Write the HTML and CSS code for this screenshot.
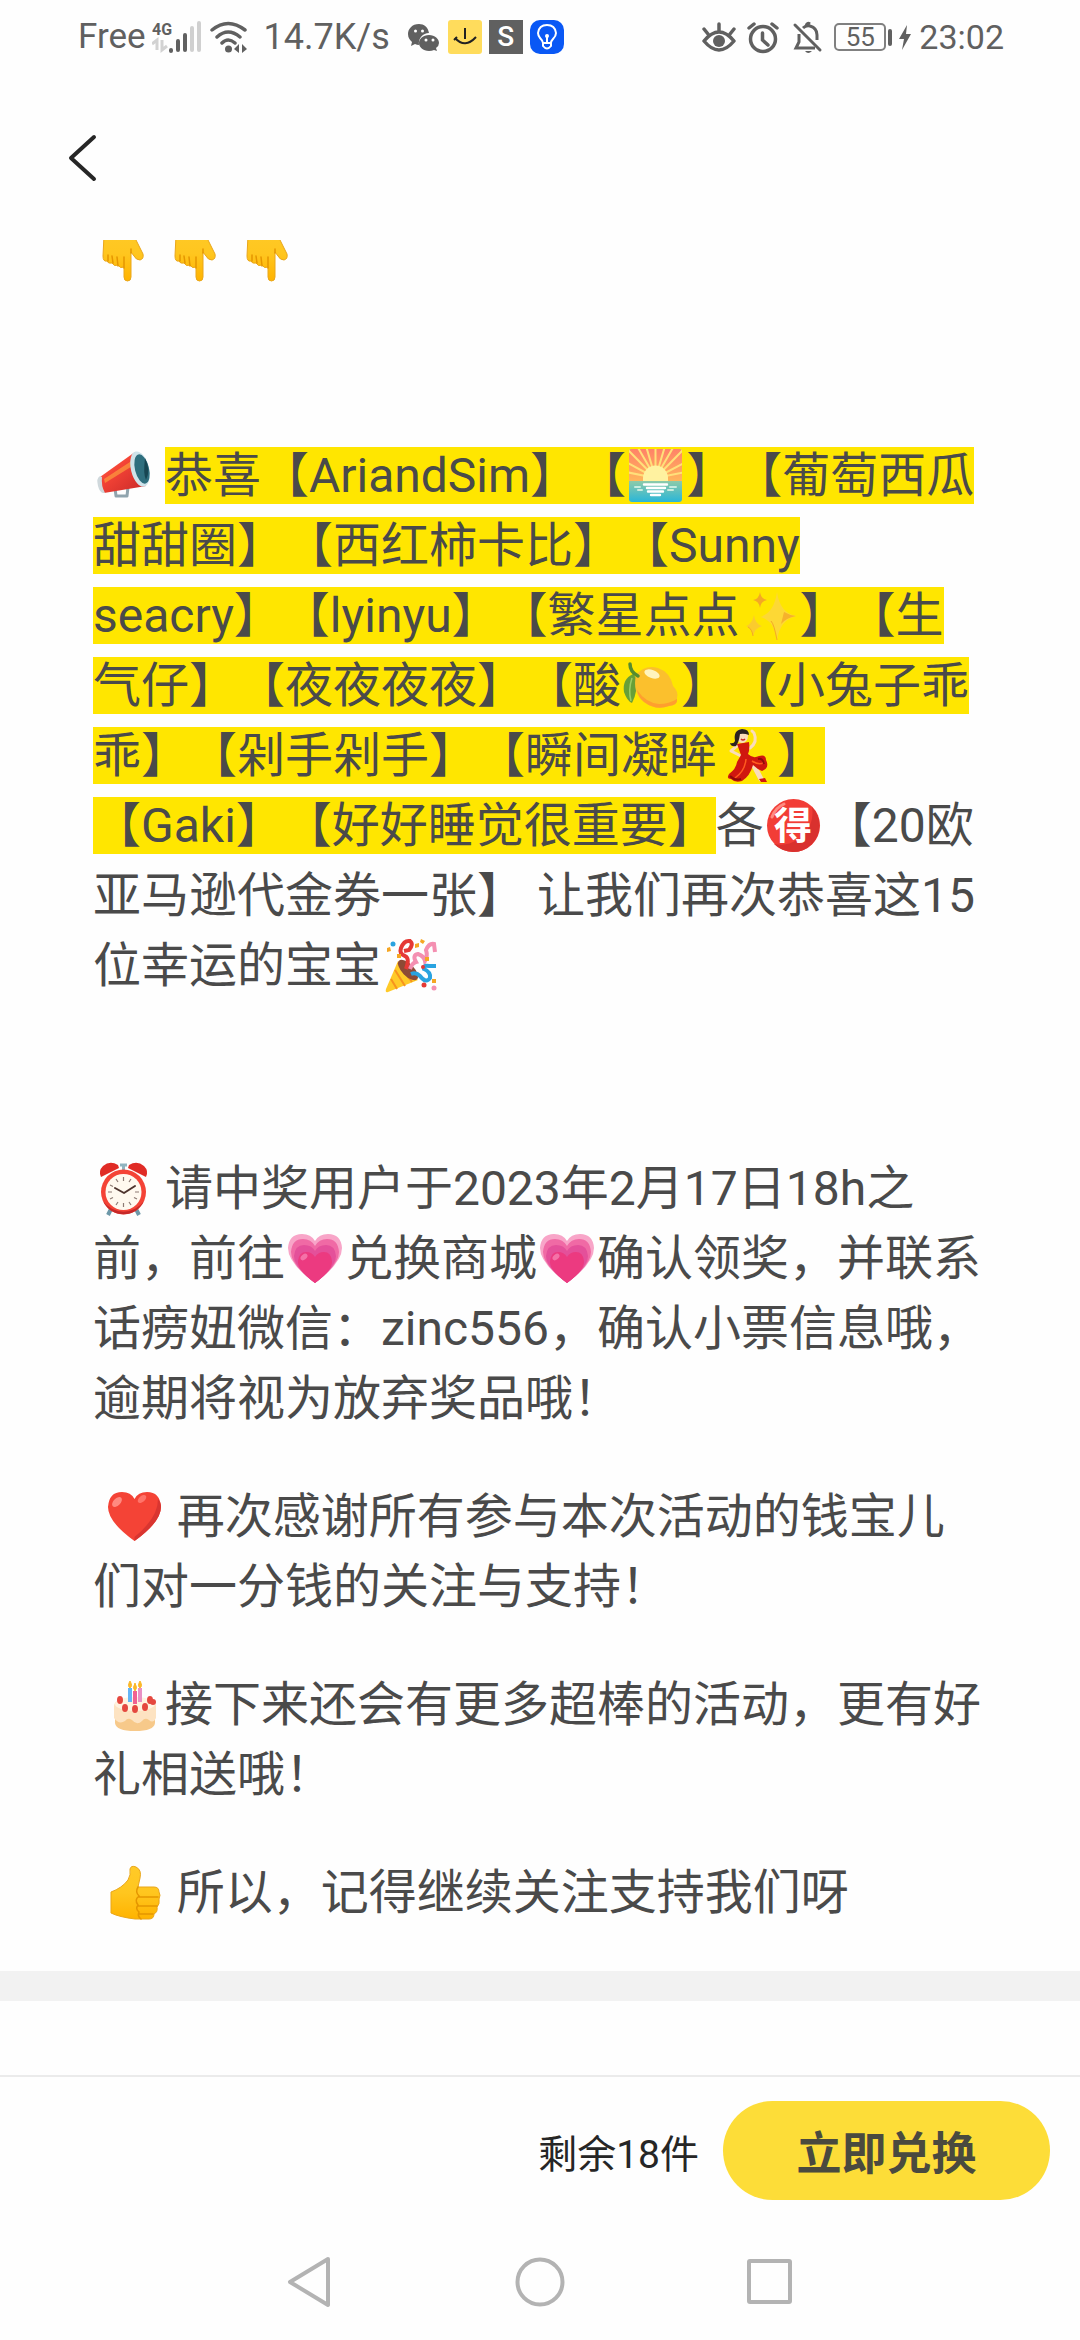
FILE: index.html
```
<!DOCTYPE html>
<html lang="zh-CN">
<head>
    <meta charset="UTF-8">
    <meta name="viewport" content="width=device-width, initial-scale=1.0">
    <title>兑换商城</title>
    <link rel="stylesheet" href="styles.css">
</head>
<body>

<!-- emoji -->
<svg class="sprite" width="0" height="0" aria-hidden="true">
    <defs>
        <linearGradient id="g-skin" x1="0" y1="0" x2="0" y2="1">
            <stop offset="0" stop-color="#ffca28"/>
            <stop offset="0.5" stop-color="#ffc61f"/>
            <stop offset="1" stop-color="#ffb300"/>
        </linearGradient>
        <linearGradient id="g-horn" x1="0" y1="0" x2="1" y2="1">
            <stop offset="0" stop-color="#ff7043"/>
            <stop offset="0.4" stop-color="#f44336"/>
            <stop offset="1" stop-color="#c62828"/>
        </linearGradient>
        <linearGradient id="g-sky" x1="0" y1="0" x2="0" y2="1">
            <stop offset="0" stop-color="#ff8268"/>
            <stop offset="1" stop-color="#ffb65c"/>
        </linearGradient>
        <linearGradient id="g-sea" x1="0" y1="0" x2="0" y2="1">
            <stop offset="0.600" stop-color="#8fcba8"/>
            <stop offset="1" stop-color="#29b6d8"/>
        </linearGradient>
        <clipPath id="c-sky"><rect x="3" y="3" width="53" height="34"/></clipPath>
    </defs>

    <symbol id="e-down" viewBox="0 0 60 60">
        <path d="M11 12 Q11 3 20 3 H38 Q42 3 43 10 V17 L50 31 Q51 36 47 37 Q43 37 41 33 L38 29 V54 Q38 58 34.500 58 Q31 58 31 54 V44 Q27 46 25 42 Q21 44 19 40 Q15 41 14 38 Q10 39 10 33 Z" fill="url(#g-skin)" stroke="#e9a61b" stroke-width="1"/>
        <path d="M15 38 V32 M20 40 L19 33 M25 43 L24 34 M31 45 V34 M38 30 V26" fill="none" stroke="#e59600" stroke-width="1.500" stroke-linecap="round"/>
    </symbol>

    <symbol id="e-horn" viewBox="0 0 60 60">
        <path d="M22 42 L23 50 H34 L35 41" fill="none" stroke="#90a4ae" stroke-width="3" stroke-linejoin="round"/>
        <path d="M7 31 L42 6 L53 40 L11 47 Q5 42 7 31 Z" fill="url(#g-horn)"/>
        <path d="M11 33 L40 14 L41 19 L12 37 Z" fill="#ffab40" opacity="0.6"/>
        <path d="M7 30 Q3 32 5 40 Q7 48 12 47 Q8 40 9 31 Z" fill="#cfd8dc"/>
        <ellipse cx="47" cy="23" rx="9" ry="18" transform="rotate(-14 47 23)" fill="#cfe3ea"/>
        <ellipse cx="49" cy="23" rx="7" ry="15" transform="rotate(-14 49 23)" fill="#2f6f7e"/>
        <path d="M52 12 Q58 24 53 34 Q50 28 52 12 Z" fill="#174652"/>
    </symbol>

    <symbol id="e-sunrise" viewBox="0 0 60 60">
        <rect x="3" y="3" width="53" height="53" rx="3" fill="url(#g-sea)"/>
        <path d="M3 35 V6 Q3 3 6 3 H53 Q56 3 56 6 V35 Z" fill="url(#g-sky)"/>
        <g clip-path="url(#c-sky)" stroke="#ffe07a" stroke-width="2">
            <path d="M29.500 32 L0 26 M29.500 32 L0 16 M29.500 32 L2 4 M29.500 32 L11 0 M29.500 32 L20 0 M29.500 32 V0 M29.500 32 L39 0 M29.500 32 L48 0 M29.500 32 L57 4 M29.500 32 L60 16 M29.500 32 L60 26"/>
        </g>
        <path d="M17 35 V32 A12.500 12.500 0 0 1 42 32 V35 Z" fill="#fff2a0"/>
        <path d="M18 38.500 H41 M21 42 H39 M22 45.500 H37 M25 49 H34" stroke="#fff" stroke-width="2.400" stroke-linecap="round"/>
        <path d="M9 41 H14 M12 44 H16 M44 41 H50 M42 44 H47" stroke="#c8ecdf" stroke-width="2" stroke-linecap="round"/>
    </symbol>

    <symbol id="e-sparkles" viewBox="0 0 60 60">
        <path d="M37 6 Q40 27 56 30 Q40 34 37 54 Q34 34 20 31 Q34 27 37 6 Z" fill="#fdd835"/>
        <path d="M44 26 Q49 29 56 30 Q46 32 41 38 Z" fill="#f6b22c"/>
        <path d="M20 6 Q21 13 27 14 Q21 15 20 22 Q19 15 13 14 Q19 13 20 6 Z" fill="#f4a825"/>
        <path d="M14 29 Q15 38 22 40 Q15 42 13 50 Q12 42 6 40 Q12 38 14 29 Z" fill="#fbcb2d"/>
        <path d="M37 54 Q34 38 31 35 M13 50 Q12 43 8 41" fill="none" stroke="#f4a825" stroke-width="1"/>
    </symbol>

    <symbol id="e-lemon" viewBox="0 0 60 60">
        <path d="M12 18 Q1 23 3 36 Q6 45 11 47 Q17 36 15 22 Z" fill="#689f38"/>
        <path d="M11 22 Q7 34 10 45" fill="none" stroke="#9ccc65" stroke-width="1.500"/>
        <path d="M15 19 Q24 8 37 12 Q49 16 52 30 Q58 36 56 42 Q57 49 48 50 Q35 55 23 46 Q11 37 15 19 Z" fill="#fbc02d"/>
        <path d="M16 34 Q25 47 38 48 Q48 48 56 43 Q57 49 48 50 Q35 55 23 46 Q17 41 16 34 Z" fill="#ff9f2e"/>
        <ellipse cx="31" cy="18" rx="8" ry="4" transform="rotate(20 31 18)" fill="#fff4bd"/>
        <path d="M9 8 Q9 16 17 20" fill="none" stroke="#558b2f" stroke-width="3.500" stroke-linecap="round"/>
    </symbol>

    <symbol id="e-dancer" viewBox="0 0 60 60">
        <path d="M33 22 Q41 16 37 7 L35 5" fill="none" stroke="#fadcbc" stroke-width="3" stroke-linecap="round"/>
        <path d="M21 19 L14 25 L24 30" fill="none" stroke="#fadcbc" stroke-width="3" stroke-linecap="round" stroke-linejoin="round"/>
        <path d="M34 34 L44 53" stroke="#fadcbc" stroke-width="5" stroke-linecap="round"/>
        <path d="M20 18 L32 16 Q33 24 31 28 Q36 33 42 30 Q49 28 49 34 Q53 42 45 45 Q40 43 36 39 Q33 50 25 55 Q18 57 14 53 Q9 53 12 48 Q19 43 20 36 L24 29 Z" fill="#d0170f"/>
        <path d="M29 33 Q28 45 18 52 M35 35 Q43 40 47 36" fill="none" stroke="#ff5a1f" stroke-width="1.500"/>
        <path d="M13 50 Q18 55 24 53 M41 33 Q46 32 47 38" fill="none" stroke="#8e0b08" stroke-width="2"/>
        <ellipse cx="25" cy="10" rx="6" ry="7" fill="#fadcbc"/>
        <path d="M18 15 Q16 4 25 3 Q32 3 32 9 Q27 7 23 8 Q22 16 19 20 Q14 21 13 17 Q17 18 18 15 Z" fill="#2b2221"/>
        <path d="M24 13 Q26 15 28 13" fill="none" stroke="#c62828" stroke-width="1.500"/>
        <path d="M42 53 L48 52 L50 56 H44 Z" fill="#d0170f"/>
    </symbol>

    <symbol id="e-party" viewBox="0 0 60 60">
        <path d="M17 25 L37 44 L7 56 Q4 57 5 53 Z" fill="#ffca28"/>
        <path d="M14 34 L24 50 M10 43 L16 53 M17 27 L31 46" stroke="#f7931e" stroke-width="2"/>
        <ellipse cx="27" cy="34" rx="6" ry="13" transform="rotate(-44 27 34)" fill="#8d4a35"/>
        <path d="M25 33 Q29 22 24 20 Q18 18 20 12 Q23 4 29 5 Q33 8 28 14 L23 15" fill="none" stroke="#e53935" stroke-width="4"/>
        <path d="M29 33 Q31 27 35 26 Q31 19 37 18 Q43 20 44 25 Q47 20 45 14 Q48 7 53 8 L54 16" fill="none" stroke="#f48fb1" stroke-width="4"/>
        <path d="M30 38 Q35 36 39 40 Q45 48 49 42 Q50 36 43 33 Q42 29 48 30 L55 30" fill="none" stroke="#29a3e0" stroke-width="4"/>
        <circle cx="12" cy="8" r="2.500" fill="#29a3e0"/>
        <circle cx="42" cy="31" r="2" fill="#e53935"/>
        <circle cx="43" cy="49" r="2.500" fill="#e53935"/>
        <circle cx="53" cy="52" r="2.500" fill="#f48fb1"/>
        <path d="M6 12 L9 11 L10 15 L6 16 Z M34 8 L38 7 L38 11 L34 12 Z M40 3 L44 5 L42 8 L39 6 Z M51 43 H55 V47 H51 Z M44 21 H48 V25 H44 Z M16 18 H20 V22 H16 Z" fill="#f5a623"/>
    </symbol>

    <symbol id="e-alarm" viewBox="0 0 60 60">
        <path d="M18 50 L15 56 M43 50 L46 56" stroke="#6d98a8" stroke-width="4"/>
        <path d="M30.500 12 V6 M27 6 H34" stroke="#90b4c0" stroke-width="3"/>
        <path d="M8 18 Q5 12 10 7 Q17 1 25 6 L26 9 Z M53 18 Q56 12 51 7 Q44 1 36 6 L35 9 Z" fill="#e02b26"/>
        <circle cx="30.500" cy="33" r="22.500" fill="#f44336"/>
        <path d="M10 42 A22.500 22.500 0 0 0 51 42 A25 25 0 0 1 10 42 Z" fill="#c62828"/>
        <circle cx="30.500" cy="33" r="18" fill="#fff9ef"/>
        <path d="M30.500 18 V22 M30.500 44 V48 M15 33 H19 M42 33 H46 M23 20 L25 23 M38 20 L36 23 M17 26 L20 27.500 M17 40 L20 38.500 M23 46 L25 43 M38 46 L36 43 M44 40 L41 38.500" stroke="#8d7b74" stroke-width="1.200"/>
        <path d="M22 29 L31 34 L42 27" fill="none" stroke="#4e342e" stroke-width="2" stroke-linecap="round" stroke-linejoin="round"/>
    </symbol>

    <symbol id="e-grow" viewBox="0 0 60 60">
        <path d="M30 54 Q3 34 3 19 Q4 5 17 5 Q26 5 30 12 Q34 5 43 5 Q56 5 57 19 Q57 34 30 54 Z" fill="#f8a5c8"/>
        <path d="M30 54 Q6 36 6 23 Q7 10 18 10 Q26 10 30 17 Q34 10 42 10 Q53 10 54 23 Q54 36 30 54 Z" fill="#f06aa5"/>
        <path d="M30 54 Q9 38 9 27 Q10 16 19 16 Q27 16 30 22 Q33 16 41 16 Q50 16 51 27 Q51 38 30 54 Z" fill="#e4509a"/>
        <path d="M30 54 Q12 41 13 32 Q14 23 21 23 Q27 23 30 28 Q33 23 39 23 Q46 23 47 32 Q48 41 30 54 Z" fill="#ec3a80"/>
        <ellipse cx="19" cy="28" rx="4" ry="2.500" transform="rotate(-40 19 28)" fill="#f472a8"/>
    </symbol>

    <symbol id="e-heart" viewBox="0 0 60 60">
        <path d="M29.500 54 Q3 35 3 20 Q4 5 17 5 Q26 5 29.500 12 Q33 5 42 5 Q55 5 56 20 Q56 35 29.500 54 Z" fill="#f44336"/>
        <path d="M53 12 Q53 31 29.500 50 L29.500 54 Q56 35 56 20 Q56 15 53 12 Z" fill="#d93530"/>
        <ellipse cx="12" cy="15" rx="6" ry="3.500" transform="rotate(-45 12 15)" fill="#ff8a80"/>
        <ellipse cx="37" cy="12" rx="5" ry="3" transform="rotate(-40 37 12)" fill="#ff7369"/>
    </symbol>

    <symbol id="e-cake" viewBox="0 1 60 60">
        <path d="M10 40 H50 V49 Q49 57 30 57 Q11 57 10 49 Z" fill="#f7c98a"/>
        <path d="M9 32 Q9 24 30 24 Q51 24 51 32 V44 Q48 50 44 46 Q40 43 37 47 Q32 52 27 46 Q23 43 20 47 Q14 51 9 44 Z" fill="#fde3c2"/>
        <ellipse cx="30" cy="30" rx="20" ry="7" fill="#fff3e0"/>
        <path d="M25 14 V28" stroke="#64b5f6" stroke-width="4"/>
        <path d="M30 17 V30" stroke="#f06292" stroke-width="4"/>
        <path d="M35 14 V28" stroke="#e991c4" stroke-width="4"/>
        <path d="M25 7 Q22 12 25 14 Q28 12 25 7 Z M30 9 Q27 14 30 17 Q33 14 30 9 Z M35 7 Q32 12 35 14 Q38 12 35 7 Z" fill="#fbb829" stroke="#fbb829"/>
        <g fill="#e5483f">
            <ellipse cx="15" cy="26" rx="3" ry="4"/><ellipse cx="45" cy="26" rx="3" ry="4"/>
            <ellipse cx="20" cy="34" rx="3" ry="4"/><ellipse cx="40" cy="33" rx="3" ry="4"/>
            <ellipse cx="30" cy="35" rx="3" ry="4"/><ellipse cx="48" cy="28" rx="3" ry="3"/>
        </g>
    </symbol>

    <symbol id="e-thumb" viewBox="0 0 60 60">
        <path d="M6 29 Q17 25 23 17 Q26 12 25 6 Q26 2 31 4 Q37 7 35 15 L33 24 H49 Q54 24 54 29 Q56 32 54 36 Q55 41 52 44 Q53 49 49 51 Q49 56 44 56 H30 Q14 54 6 50 Z" fill="url(#g-skin)" stroke="#e9a61b" stroke-width="1"/>
        <path d="M33 24 Q30 29 34 33 Q29 37 33 42 Q30 46 34 49 Q32 53 36 56 M34 34 H53 M33 43 H52 M34 51 H48" fill="none" stroke="#e59600" stroke-width="1.500" stroke-linecap="round"/>
    </symbol>
</svg>

<header class="header">
    <div class="status">
        <div class="status-left">
            <span class="carrier">Free</span>
            <svg class="signal" viewBox="0 0 52 36">
                <text class="net-type" x="0" y="16">4G</text>
                <path d="M0 25 L5 21 V31 M10 21 V31 L15 27" fill="none" stroke="#d2d2d2" stroke-width="3"/>
                <path d="M19 31 V32 M26 22 V31 M33 16 V31" stroke="#606060" stroke-width="4" stroke-linecap="round"/>
                <path d="M40 9 V31 M47 4 V31" stroke="#d0d0d0" stroke-width="4" stroke-linecap="round"/>
            </svg>
            <svg class="wifi" viewBox="0 0 38 36">
                <path d="M2 11 Q18 -2 35 11 M7 18 Q18 8 30 18 M12 24 Q18 18 25 24" fill="none" stroke="#606060" stroke-width="3.500" stroke-linecap="round"/>
                <circle cx="18.500" cy="30" r="3.500" fill="#606060"/>
                <path d="M24 30 L29 25 V34 M32 25 L37 30 L32 34 Z" fill="#606060"/>
            </svg>
            <span class="speed">14.7K/s</span>
            <svg class="app wechat" viewBox="0 0 34 34">
                <path d="M12 4 C5 4 1 9 1 14 C1 18 3 20 5 22 L4 26 L8 24 Q10 25 12 25 C11 18 16 13 22 13 C21 7 17 4 12 4 Z" fill="#606060"/>
                <path d="M22 15 C16 15 12 19 12 23 C12 27 16 31 22 31 Q25 31 27 30 L30 31 L29 28 Q32 26 32 23 C32 19 28 15 22 15 Z" fill="#606060"/>
                <g fill="#fff"><circle cx="8.500" cy="11" r="1.500"/><circle cx="15.500" cy="11" r="1.500"/><circle cx="19" cy="20" r="1.500"/><circle cx="26" cy="20" r="1.500"/></g>
            </svg>
            <svg class="app" viewBox="0 0 34 34">
                <rect width="34" height="34" rx="3" fill="#ffdc5c"/>
                <path d="M17 8 V19 M7 18 Q17 29 28 17" fill="none" stroke="#222" stroke-width="2"/>
                <path d="M6 20 L9 17" stroke="#222" stroke-width="2"/>
            </svg>
            <span class="app app-s">S</span>
            <svg class="app" viewBox="0 0 34 34">
                <rect width="34" height="34" rx="10" fill="#0a58f5"/>
                <path d="M13 23 Q13 21 10 18 Q8 15 8 13 Q9 5 17 5 Q25 5 26 13 Q26 16 23 19 Q21 21 21 23 Z M13 23 V26 Q17 31 21 26 V23 M17 17 V23" fill="none" stroke="#fff" stroke-width="2"/>
                <circle cx="17" cy="16" r="2" fill="#fff"/>
            </svg>
        </div>
        <div class="status-right">
            <svg class="st-icon" viewBox="0 0 34 34">
                <path d="M2 21 Q17 3 32 21 Q17 39 2 21 Z M17 11 V4 M6 14 L2 9 M28 14 L32 9" fill="none" stroke="#606060" stroke-width="3.500" stroke-linecap="round" stroke-linejoin="round"/>
                <circle cx="17" cy="21" r="6" fill="#606060"/>
            </svg>
            <svg class="st-icon" viewBox="0 0 34 34">
                <circle cx="17" cy="19" r="12.500" fill="none" stroke="#606060" stroke-width="3.500"/>
                <path d="M3 8 L8 4 M31 8 L26 4 M16.500 13 V20 L22 25" fill="none" stroke="#606060" stroke-width="3.500" stroke-linecap="round"/>
            </svg>
            <svg class="st-icon" viewBox="0 0 34 34">
                <path d="M5 5 L30 30" stroke="#606060" stroke-width="3" stroke-linecap="round"/>
                <path d="M13 8 Q16 5 20 6 Q27 8 27 15 V20 M9 14 V22 L6 28 H25 M16 6 Q17 2 20 4" fill="none" stroke="#606060" stroke-width="3"/>
                <path d="M15 31 H22 Q18 35 15 31 Z" fill="#606060"/>
            </svg>
            <span class="battery">55</span>
            <svg class="bolt" viewBox="0 0 14 28"><path d="M9 2 L1 16 H6 L4 27 L13 11 H8 Z" fill="#606060"/></svg>
            <span class="clock">23:02</span>
        </div>
    </div>
    <div class="topbar">
        <button type="button" class="back" aria-label="返回">
            <svg viewBox="0 0 30 50"><path d="M27 4 L4 25 L27 46" fill="none" stroke="#262626" stroke-width="4" stroke-linecap="round" stroke-linejoin="round"/></svg>
        </button>
    </div>
</header>

<main class="article">
    <p><svg class="emoji"><use href="#e-down"/></svg> <svg class="emoji"><use href="#e-down"/></svg> <svg class="emoji"><use href="#e-down"/></svg></p>
    <p class="blank"></p>
    <p><svg class="emoji"><use href="#e-horn"/></svg> <mark>恭喜【AriandSim】【<svg class="emoji"><use href="#e-sunrise"/></svg>】【葡萄西瓜甜甜圈】【西红柿卡比】【Sunny seacry】【lyinyu】【繁星点点<svg class="emoji"><use href="#e-sparkles"/></svg>】【生气仔】【夜夜夜夜】【酸<svg class="emoji"><use href="#e-lemon"/></svg>】【小兔子乖乖】【剁手剁手】【瞬间凝眸<svg class="emoji"><use href="#e-dancer"/></svg>】【Gaki】【好好睡觉很重要】</mark>各<svg class="emoji" viewBox="0 0 60 60">
        <circle cx="29.500" cy="29.500" r="26.500" fill="#f23d36"/>
        <path d="M48 11 A26.500 26.500 0 0 1 10 48 A32 32 0 0 0 48 11 Z" fill="#d9312e"/>
        <path d="M8 21 Q11 12 20 8" fill="none" stroke="#ff8a80" stroke-width="3" stroke-linecap="round"/>
        <text class="get-char" x="29" y="43" text-anchor="middle">得</text>
    </svg>【20欧亚马逊代金券一张】 让我们再次恭喜这15位幸运的宝宝<svg class="emoji"><use href="#e-party"/></svg></p>
    <p class="blank"></p>
    <p><svg class="emoji"><use href="#e-alarm"/></svg> 请中奖用户于2023年2月17日18h之前，前往<svg class="emoji"><use href="#e-grow"/></svg>兑换商城<svg class="emoji"><use href="#e-grow"/></svg>确认领奖，并联系话痨妞微信：zinc556，确认小票信息哦，逾期将视为放弃奖品哦！</p>
    <p>&nbsp;<svg class="emoji"><use href="#e-heart"/></svg> 再次感谢所有参与本次活动的钱宝儿们对一分钱的关注与支持！</p>
    <p>&nbsp;<svg class="emoji"><use href="#e-cake"/></svg>接下来还会有更多超棒的活动，更有好礼相送哦！</p>
    <p>&nbsp;<svg class="emoji"><use href="#e-thumb"/></svg> 所以，记得继续关注支持我们呀</p>
</main>

<div class="divider"></div>

<footer class="footer">
    <div class="action">
        <span class="stock">剩余18件</span>
        <button type="button" class="exchange">立即兑换</button>
    </div>
    <nav class="sysnav">
        <button type="button" aria-label="返回"><svg viewBox="0 0 50 54"><path d="M43 4 L5 27 L43 50 Z" fill="none" stroke="#b3b3b3" stroke-width="4" stroke-linejoin="round"/></svg></button>
        <button type="button" aria-label="主页"><svg viewBox="0 0 50 54"><circle cx="25" cy="27" r="22.500" fill="none" stroke="#b3b3b3" stroke-width="4"/></svg></button>
        <button type="button" aria-label="最近任务"><svg viewBox="0 0 50 54"><rect x="4" y="6" width="41" height="41" rx="1" fill="none" stroke="#b3b3b3" stroke-width="4"/></svg></button>
    </nav>
</footer>

</body>
</html>
```

FILE: styles.css
```
* {
    box-sizing: border-box;
}

body {
    margin: 0;
    min-height: 100vh;
    display: flex;
    flex-direction: column;
    background-color: #fefefe;
    color: #4a4a4a;
    font-family: Roboto, "Noto Sans CJK SC", sans-serif;
    text-spacing-trim: space-all;
}

button {
    font-family: inherit;
    border: none;
    padding: 0;
    background: none;
    cursor: pointer;
}

svg {
    display: block;
}

/* Topo */
.header {
    position: sticky;
    top: 0;
    z-index: 10;
    height: 240px;
    background-color: #fefefe;
}

.status {
    display: flex;
    justify-content: space-between;
    align-items: center;
    height: 74px;
    padding: 0 76px 0 78px;
    color: #606060;
    font-size: 35px;
    line-height: 40px;
}

.status-left,
.status-right {
    display: flex;
    align-items: center;
}

.signal {
    width: 52px;
    height: 36px;
    margin-left: 6px;
}

.net-type {
    font-size: 16px;
    font-weight: bold;
    fill: #606060;
}

.wifi {
    width: 38px;
    height: 36px;
    margin-left: 6px;
}

.speed {
    margin: 0 10px 0 16px;
    font-size: 36px;
}

.app {
    width: 34px;
    height: 34px;
    margin-left: 7px;
}

.app-s {
    background-color: #606060;
    color: #fff;
    font-size: 28px;
    font-weight: 500;
    line-height: 34px;
    text-align: center;
}

.st-icon {
    width: 34px;
    height: 34px;
    margin-right: 10px;
}

.battery {
    position: relative;
    width: 52px;
    height: 28px;
    margin-right: 12px;
    border: 2px solid #808080;
    border-radius: 5px;
    font-size: 26px;
    line-height: 25px;
    text-align: center;
}

.battery::after {
    content: "";
    position: absolute;
    top: 4px;
    right: -8px;
    width: 4px;
    height: 17px;
    border-radius: 2px;
    background-color: #606060;
}

.bolt {
    width: 14px;
    height: 28px;
    margin-right: 7px;
}

.clock {
    font-size: 34px;
}

.topbar {
    display: flex;
    padding: 59px 67px 0;
}

.back svg {
    width: 30px;
    height: 50px;
}

/* Texto */
.article {
    margin-top: -22px;
    padding: 0 93px 43px;
    font-size: 48px;
    line-height: 70px;
}

.article p {
    margin: 0 0 48px;
}

.article p:last-child {
    margin-bottom: 0;
}

.article .blank {
    height: 57px;
}

.article mark {
    background-color: #ffe600;
    color: inherit;
}

.emoji {
    display: inline-block;
    width: 60px;
    height: 60px;
    vertical-align: -14px;
}

.get-char {
    font-family: "Noto Sans CJK SC", sans-serif;
    font-size: 38px;
    font-weight: bold;
    fill: #fff;
}

.divider {
    height: 30px;
    background-color: #f2f2f2;
}

/* Rodapé */
.footer {
    margin-top: auto;
    background-color: #fefefe;
}

.action {
    display: flex;
    justify-content: flex-end;
    align-items: center;
    gap: 24px;
    padding: 24px 30px;
    border-top: 2px solid #ebebeb;
}

.stock {
    color: #262626;
    font-size: 39px;
}

.exchange {
    width: 327px;
    height: 99px;
    border-radius: 50px;
    background-color: #fddd38;
    color: #4a4a3f;
    font-size: 45px;
    font-weight: bold;
}

.sysnav {
    display: flex;
    justify-content: center;
    align-items: center;
    gap: 180px;
    height: 116px;
}

.sysnav svg {
    width: 50px;
    height: 54px;
}
```
